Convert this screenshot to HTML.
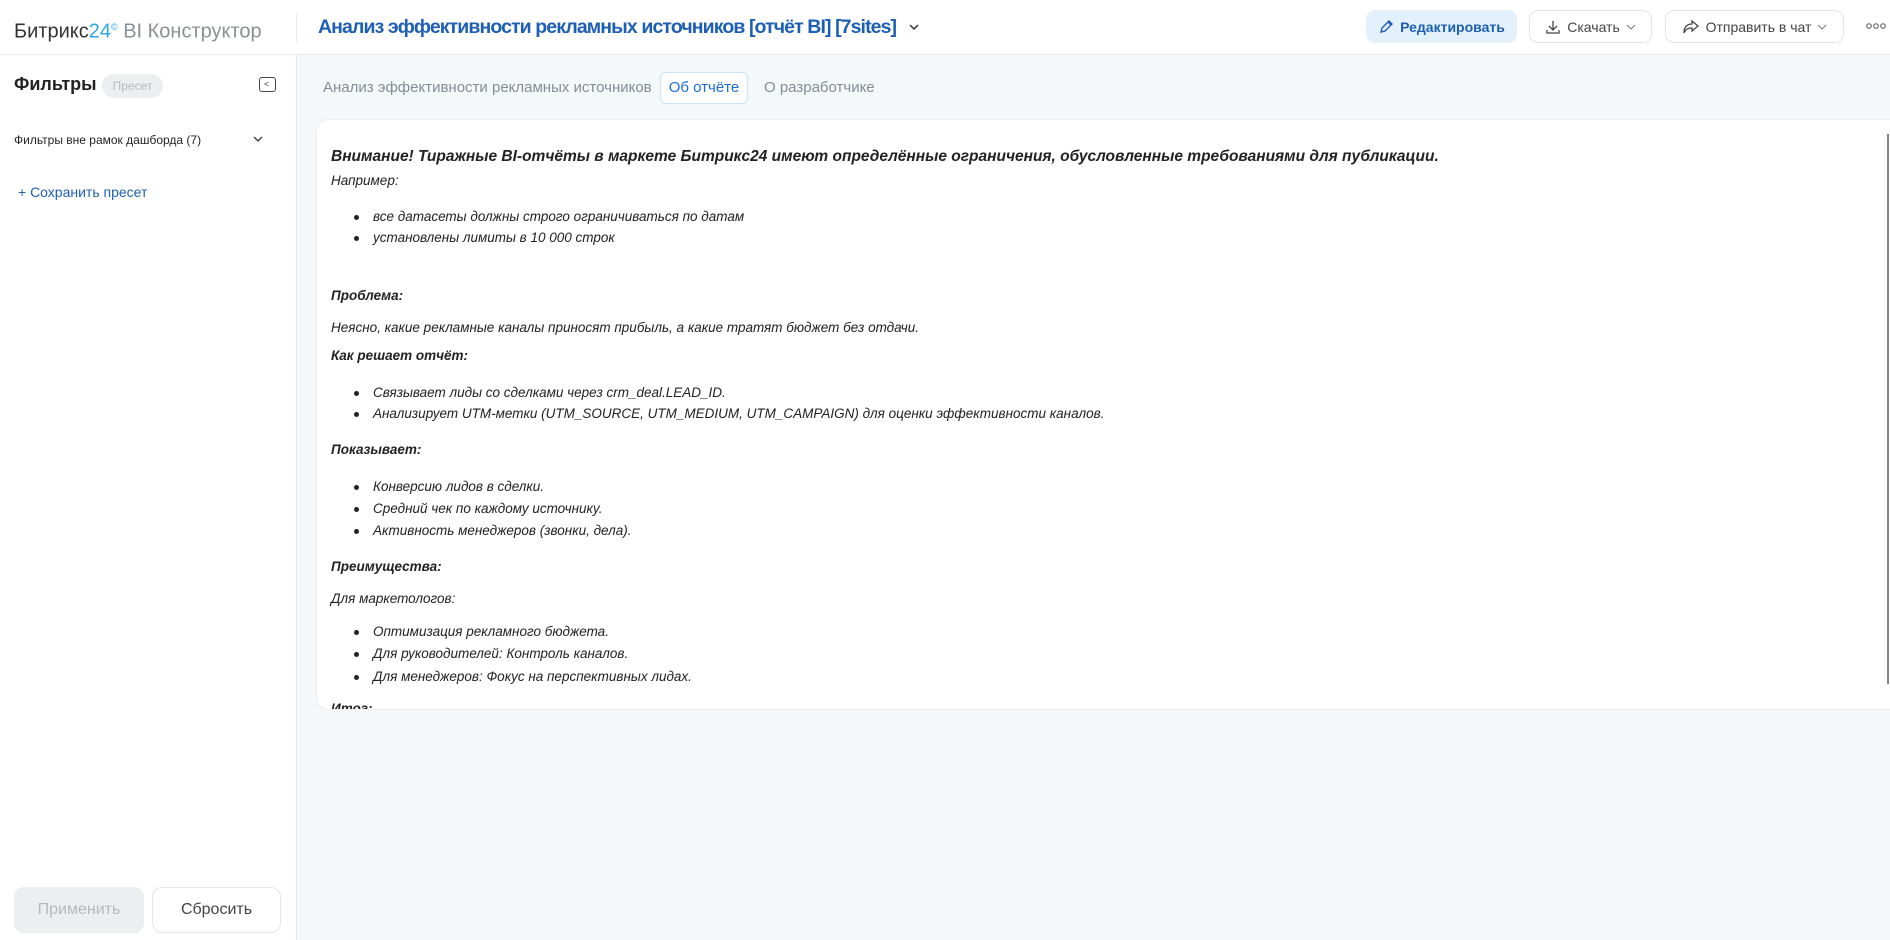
<!DOCTYPE html>
<html><head><meta charset="utf-8"><style>
*{margin:0;padding:0;box-sizing:border-box}
body{width:1890px;height:940px;overflow:hidden;background:#f5f8f9;font-family:"Liberation Sans","Noto Sans CJK SC",sans-serif;color:#333;position:relative}
.a{position:absolute;white-space:nowrap}
.hdr{position:absolute;left:0;top:0;width:1890px;height:55px;background:#fff;border-bottom:1px solid #e6e8ea}
.side{position:absolute;left:0;top:55px;width:297px;height:885px;background:#fff;border-right:1px solid #e6e8ea}
.btn{position:absolute;top:10px;height:33px;border-radius:9px;border:1px solid #e3e5e8;background:#fff;font-size:14px;color:#444;display:flex;align-items:center;justify-content:center;gap:6px}
.card{position:absolute;left:316px;top:119px;width:1574px;height:591px;background:#fff;border:1px solid #eceef0;border-right:none;border-radius:12px 0 0 12px;overflow:hidden}
.t{position:absolute;left:14px;white-space:nowrap;font-style:italic;font-size:13.5px;color:#222;line-height:18px}
.b{font-weight:bold}
.li{left:56px}
.li:before{content:"";position:absolute;left:-19px;top:7px;width:5px;height:5px;border-radius:50%;background:#222}
</style></head><body>
<div class="hdr">
 <div class="a" style="left:14px;top:14px;font-size:20px;line-height:26px;color:#333">Битрикс<span style="color:#2fa4e7">24</span><sup style="font-size:9px;color:#2fa4e7">©</sup> <span style="color:#8a9096">BI Конструктор</span></div>
 <div class="a" style="left:296px;top:14px;width:1px;height:28px;background:#e6e8ea"></div>
 <div class="a" style="left:318px;top:13px;font-size:19.5px;line-height:28px;color:#1d5fb4;font-weight:bold;letter-spacing:-0.9px">Анализ эффективности рекламных источников [отчёт BI] [7sites]</div>
 <svg class="a" style="left:908px;top:22px" width="12" height="10" viewBox="0 0 12 10"><path d="M2 3l4 4 4-4" stroke="#333" stroke-width="1.5" fill="none"/></svg>
 <div class="btn" style="left:1366px;width:151px;background:#e3f1fd;border-color:#e3f1fd;color:#1d5fb4;font-weight:bold;font-size:14px"><svg width="16" height="16" viewBox="0 0 16 16"><path d="M3 13l1-4 7-7 3 3-7 7z M10 3l3 3" stroke="#1d5fb4" stroke-width="1.4" fill="none"/></svg>Редактировать</div>
 <div class="btn" style="left:1529px;width:123px"><svg width="16" height="16" viewBox="0 0 16 16"><path d="M8 2v9M4 7l4 4 4-4M2 11v3h12v-3" stroke="#444" stroke-width="1.3" fill="none"/></svg>Скачать <svg width="10" height="8" viewBox="0 0 10 8"><path d="M1 2l4 4 4-4" stroke="#777" stroke-width="1" fill="none"/></svg></div>
 <div class="btn" style="left:1665px;width:179px"><svg width="18" height="16" viewBox="0 0 18 16"><path d="M10 2l6 5-6 5V9C6 9 4 10 2 14 2 8 5 5 10 5z" stroke="#444" stroke-width="1.3" fill="none"/></svg>Отправить в чат <svg width="10" height="8" viewBox="0 0 10 8"><path d="M1 2l4 4 4-4" stroke="#777" stroke-width="1" fill="none"/></svg></div>
 <svg class="a" style="left:1866px;top:22px" width="22" height="8" viewBox="0 0 22 8"><circle cx="3" cy="4" r="2.3" stroke="#555" fill="none"/><circle cx="10" cy="4" r="2.3" stroke="#555" fill="none"/><circle cx="17" cy="4" r="2.3" stroke="#555" fill="none"/></svg>
</div>
<div class="side">
 <div class="a" style="left:14px;top:19px;font-size:18px;font-weight:bold;color:#222">Фильтры</div>
 <div class="a" style="left:102px;top:19px;width:61px;height:24px;border-radius:12px;background:#eceef0;color:#b5b9bd;font-size:12px;line-height:24px;text-align:center">Пресет</div>
 <div class="a" style="left:259px;top:22px;width:17px;height:15px;border:1.5px solid #444;border-radius:3px"></div>
 <div class="a" style="left:264px;top:24px;font-size:9px;color:#444">&lt;</div>
 <div class="a" style="left:14px;top:78px;font-size:12px;color:#222">Фильтры вне рамок дашборда (7)</div>
 <svg class="a" style="left:252px;top:79px" width="12" height="10" viewBox="0 0 12 10"><path d="M2 3l4 4 4-4" stroke="#333" stroke-width="1.3" fill="none"/></svg>
 <div class="a" style="left:18px;top:129px;font-size:14px;color:#1d5fb4">+ Сохранить пресет</div>
 <div class="a" style="left:14px;top:832px;width:130px;height:46px;border-radius:10px;background:#eceef0;color:#b5b9bd;font-size:16px;line-height:46px;text-align:center">Применить</div>
 <div class="a" style="left:152px;top:832px;width:129px;height:46px;border-radius:10px;border:1px solid #e3e5e8;color:#444;font-size:16px;line-height:44px;text-align:center">Сбросить</div>
</div>
<div class="a" style="left:323px;top:79px;font-size:15px;color:#868c92">Анализ эффективности рекламных источников</div>
<div class="a" style="left:660px;top:72px;width:88px;height:32px;border:1px solid #cfe3f7;border-radius:6px;background:#fff;color:#1d6fd6;font-size:15px;line-height:30px;text-align:center">Об отчёте</div>
<div class="a" style="left:764px;top:79px;font-size:15px;color:#868c92">О разработчике</div>
<div class="card">
 <div class="t b" style="top:27px;font-size:15.5px;line-height:20px">Внимание! Тиражные BI-отчёты в маркете Битрикс24 имеют определённые ограничения, обусловленные требованиями для публикации.</div>
 <div class="t" style="top:52px">Например:</div>
 <div class="t li" style="top:88px">все датасеты должны строго ограничиваться по датам</div>
 <div class="t li" style="top:109px">установлены лимиты в 10 000 строк</div>
 <div class="t b" style="top:167px">Проблема:</div>
 <div class="t" style="top:199px">Неясно, какие рекламные каналы приносят прибыль, а какие тратят бюджет без отдачи.</div>
 <div class="t b" style="top:227px">Как решает отчёт:</div>
 <div class="t li" style="top:264px">Связывает лиды со сделками через crm_deal.LEAD_ID.</div>
 <div class="t li" style="top:285px">Анализирует UTM-метки (UTM_SOURCE, UTM_MEDIUM, UTM_CAMPAIGN) для оценки эффективности каналов.</div>
 <div class="t b" style="top:321px">Показывает:</div>
 <div class="t li" style="top:358px">Конверсию лидов в сделки.</div>
 <div class="t li" style="top:380px">Средний чек по каждому источнику.</div>
 <div class="t li" style="top:402px">Активность менеджеров (звонки, дела).</div>
 <div class="t b" style="top:438px">Преимущества:</div>
 <div class="t" style="top:470px">Для маркетологов:</div>
 <div class="t li" style="top:503px">Оптимизация рекламного бюджета.</div>
 <div class="t li" style="top:525px">Для руководителей: Контроль каналов.</div>
 <div class="t li" style="top:548px">Для менеджеров: Фокус на перспективных лидах.</div>
 <div class="t b" style="top:580px">Итог:</div>
 <div class="a" style="right:0;top:0;width:3px;height:591px;background:#fff"></div>
 <div class="a" style="right:1px;top:14px;width:2px;height:550px;background:#888"></div>
</div>
</body></html>
